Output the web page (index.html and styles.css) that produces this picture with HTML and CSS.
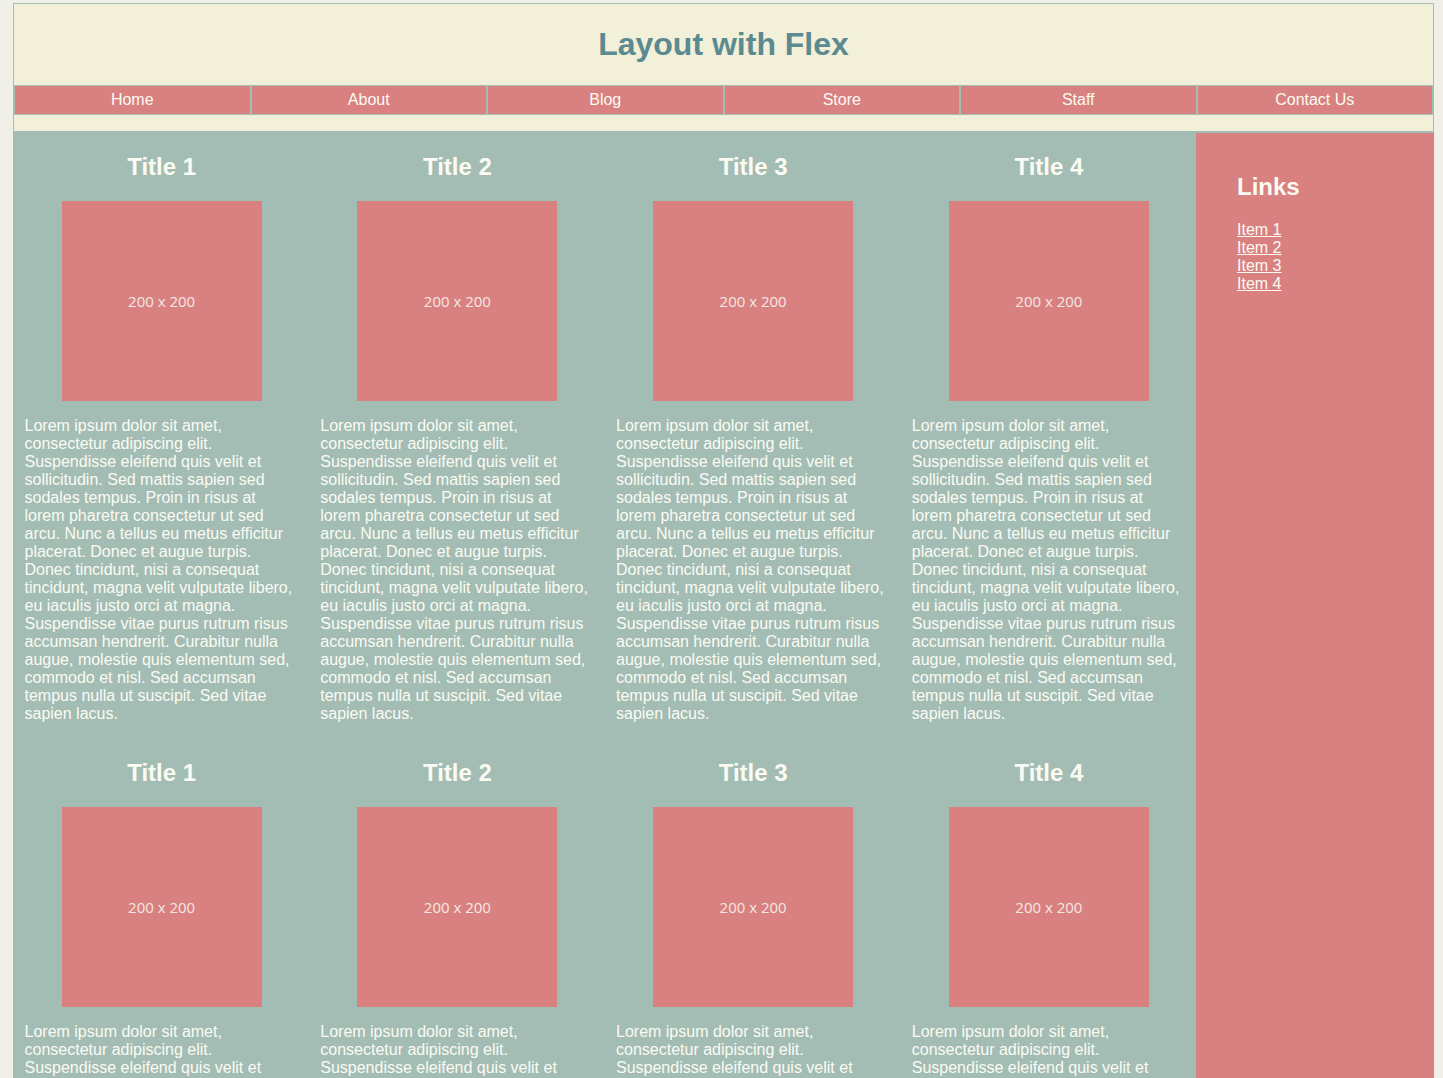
FILE: index.html
```html
<!DOCTYPE html>
<html lang="en">
<head>
<meta charset="utf-8">
<title>Layout with Flex</title>
<link rel="stylesheet" href="styles.css">
</head>
<body>
<div class="wrapper">
  <header class="header">
    <h1 class="site-title">Layout with Flex</h1>
    <nav class="nav">
      <a class="nav-item" href="#">Home</a>
      <a class="nav-item" href="#">About</a>
      <a class="nav-item" href="#">Blog</a>
      <a class="nav-item" href="#">Store</a>
      <a class="nav-item" href="#">Staff</a>
      <a class="nav-item" href="#">Contact Us</a>
    </nav>
  </header>
  <div class="main">
    <section class="content">
      <article class="card"><h2 class="card-title">Title 1</h2><div class="thumb">200 x 200</div><p class="card-text">Lorem ipsum dolor sit amet, consectetur adipiscing elit. Suspendisse eleifend quis velit et sollicitudin. Sed mattis sapien sed sodales tempus. Proin in risus at lorem pharetra consectetur ut sed arcu. Nunc a tellus eu metus efficitur placerat. Donec et augue turpis. Donec tincidunt, nisi a consequat tincidunt, magna velit vulputate libero, eu iaculis justo orci at magna. Suspendisse vitae purus rutrum risus accumsan hendrerit. Curabitur nulla augue, molestie quis elementum sed, commodo et nisl. Sed accumsan tempus nulla ut suscipit. Sed vitae sapien lacus.</p></article>
      <article class="card"><h2 class="card-title">Title 2</h2><div class="thumb">200 x 200</div><p class="card-text">Lorem ipsum dolor sit amet, consectetur adipiscing elit. Suspendisse eleifend quis velit et sollicitudin. Sed mattis sapien sed sodales tempus. Proin in risus at lorem pharetra consectetur ut sed arcu. Nunc a tellus eu metus efficitur placerat. Donec et augue turpis. Donec tincidunt, nisi a consequat tincidunt, magna velit vulputate libero, eu iaculis justo orci at magna. Suspendisse vitae purus rutrum risus accumsan hendrerit. Curabitur nulla augue, molestie quis elementum sed, commodo et nisl. Sed accumsan tempus nulla ut suscipit. Sed vitae sapien lacus.</p></article>
      <article class="card"><h2 class="card-title">Title 3</h2><div class="thumb">200 x 200</div><p class="card-text">Lorem ipsum dolor sit amet, consectetur adipiscing elit. Suspendisse eleifend quis velit et sollicitudin. Sed mattis sapien sed sodales tempus. Proin in risus at lorem pharetra consectetur ut sed arcu. Nunc a tellus eu metus efficitur placerat. Donec et augue turpis. Donec tincidunt, nisi a consequat tincidunt, magna velit vulputate libero, eu iaculis justo orci at magna. Suspendisse vitae purus rutrum risus accumsan hendrerit. Curabitur nulla augue, molestie quis elementum sed, commodo et nisl. Sed accumsan tempus nulla ut suscipit. Sed vitae sapien lacus.</p></article>
      <article class="card"><h2 class="card-title">Title 4</h2><div class="thumb">200 x 200</div><p class="card-text">Lorem ipsum dolor sit amet, consectetur adipiscing elit. Suspendisse eleifend quis velit et sollicitudin. Sed mattis sapien sed sodales tempus. Proin in risus at lorem pharetra consectetur ut sed arcu. Nunc a tellus eu metus efficitur placerat. Donec et augue turpis. Donec tincidunt, nisi a consequat tincidunt, magna velit vulputate libero, eu iaculis justo orci at magna. Suspendisse vitae purus rutrum risus accumsan hendrerit. Curabitur nulla augue, molestie quis elementum sed, commodo et nisl. Sed accumsan tempus nulla ut suscipit. Sed vitae sapien lacus.</p></article>
      <article class="card"><h2 class="card-title">Title 1</h2><div class="thumb">200 x 200</div><p class="card-text">Lorem ipsum dolor sit amet, consectetur adipiscing elit. Suspendisse eleifend quis velit et sollicitudin. Sed mattis sapien sed sodales tempus. Proin in risus at lorem pharetra consectetur ut sed arcu. Nunc a tellus eu metus efficitur placerat. Donec et augue turpis. Donec tincidunt, nisi a consequat tincidunt, magna velit vulputate libero, eu iaculis justo orci at magna. Suspendisse vitae purus rutrum risus accumsan hendrerit. Curabitur nulla augue, molestie quis elementum sed, commodo et nisl. Sed accumsan tempus nulla ut suscipit. Sed vitae sapien lacus.</p></article>
      <article class="card"><h2 class="card-title">Title 2</h2><div class="thumb">200 x 200</div><p class="card-text">Lorem ipsum dolor sit amet, consectetur adipiscing elit. Suspendisse eleifend quis velit et sollicitudin. Sed mattis sapien sed sodales tempus. Proin in risus at lorem pharetra consectetur ut sed arcu. Nunc a tellus eu metus efficitur placerat. Donec et augue turpis. Donec tincidunt, nisi a consequat tincidunt, magna velit vulputate libero, eu iaculis justo orci at magna. Suspendisse vitae purus rutrum risus accumsan hendrerit. Curabitur nulla augue, molestie quis elementum sed, commodo et nisl. Sed accumsan tempus nulla ut suscipit. Sed vitae sapien lacus.</p></article>
      <article class="card"><h2 class="card-title">Title 3</h2><div class="thumb">200 x 200</div><p class="card-text">Lorem ipsum dolor sit amet, consectetur adipiscing elit. Suspendisse eleifend quis velit et sollicitudin. Sed mattis sapien sed sodales tempus. Proin in risus at lorem pharetra consectetur ut sed arcu. Nunc a tellus eu metus efficitur placerat. Donec et augue turpis. Donec tincidunt, nisi a consequat tincidunt, magna velit vulputate libero, eu iaculis justo orci at magna. Suspendisse vitae purus rutrum risus accumsan hendrerit. Curabitur nulla augue, molestie quis elementum sed, commodo et nisl. Sed accumsan tempus nulla ut suscipit. Sed vitae sapien lacus.</p></article>
      <article class="card"><h2 class="card-title">Title 4</h2><div class="thumb">200 x 200</div><p class="card-text">Lorem ipsum dolor sit amet, consectetur adipiscing elit. Suspendisse eleifend quis velit et sollicitudin. Sed mattis sapien sed sodales tempus. Proin in risus at lorem pharetra consectetur ut sed arcu. Nunc a tellus eu metus efficitur placerat. Donec et augue turpis. Donec tincidunt, nisi a consequat tincidunt, magna velit vulputate libero, eu iaculis justo orci at magna. Suspendisse vitae purus rutrum risus accumsan hendrerit. Curabitur nulla augue, molestie quis elementum sed, commodo et nisl. Sed accumsan tempus nulla ut suscipit. Sed vitae sapien lacus.</p></article>
    </section>
    <aside class="sidebar">
      <h2 class="sidebar-title">Links</h2>
      <ul class="link-list">
        <li><a class="link" href="#">Item 1</a></li>
        <li><a class="link" href="#">Item 2</a></li>
        <li><a class="link" href="#">Item 3</a></li>
        <li><a class="link" href="#">Item 4</a></li>
      </ul>
    </aside>
  </div>
</div>
</body>
</html>
```
FILE: styles.css
```css
html, body {
  margin: 0;
  padding: 0;
}
body {
  background: #f0f0e8;
  font-family: "Liberation Sans", Arial, sans-serif;
  font-size: 16px;
  color: #fbfbf2;
}
.wrapper {
  width: 1421px;
  margin: 3px 0 0 13px;
}
.header {
  background: #f2f0d8;
  border: 1px solid #a3bdb5;
  border-bottom: 0;
  padding-bottom: 16px;
}
.site-title {
  margin: 0;
  padding: 22px 0 22px;
  line-height: 37px;
  font-size: 32px;
  font-weight: bold;
  text-align: center;
  color: #5b8a90;
}
.nav {
  display: flex;
}
.nav-item {
  flex: 1 1 0;
  display: block;
  background: #d88180;
  border: 1px solid #a3bdb5;
  color: #fbfbf2;
  text-decoration: none;
  text-align: center;
  line-height: 18px;
  padding: 5px 0;
}
.main {
  display: flex;
  align-items: stretch;
  background: #a3bdb5;
}
.content {
  flex: 1 1 auto;
  width: 1183px;
  display: grid;
  grid-template-columns: repeat(4, 1fr);
  padding-top: 2px;
}
.card {
  padding: 0 10px 0 11.5px;
  display: flex;
  flex-direction: column;
  align-items: stretch;
}
.card-title {
  margin: 20px 0;
  font-size: 24px;
  line-height: 28px;
  font-weight: bold;
  text-align: center;
  color: #fbfbf2;
}
.thumb {
  align-self: center;
  width: 200px;
  height: 200px;
  background: #d88180;
  display: flex;
  align-items: center;
  justify-content: center;
  font-family: "Open Sans", sans-serif;
  font-weight: 400;
  font-size: 15px;
  color: #f4e8e4;
}
.card-text {
  margin: 16px 0;
  line-height: 18px;
}
.sidebar {
  flex: 0 0 238px;
  margin-top: 2px;
  background: #d88180;
  padding: 20px 40px 20px 41px;
  box-sizing: border-box;
}
.sidebar-title {
  margin: 20px 0;
  font-size: 24px;
  line-height: 27.6px;
  font-weight: bold;
  color: #fbfbf2;
}
.link-list {
  list-style: none;
  margin: 0;
  padding: 0;
}
.link-list li {
  line-height: 18px;
}
.link {
  color: #fbfbf2;
  text-decoration: underline;
}
```
